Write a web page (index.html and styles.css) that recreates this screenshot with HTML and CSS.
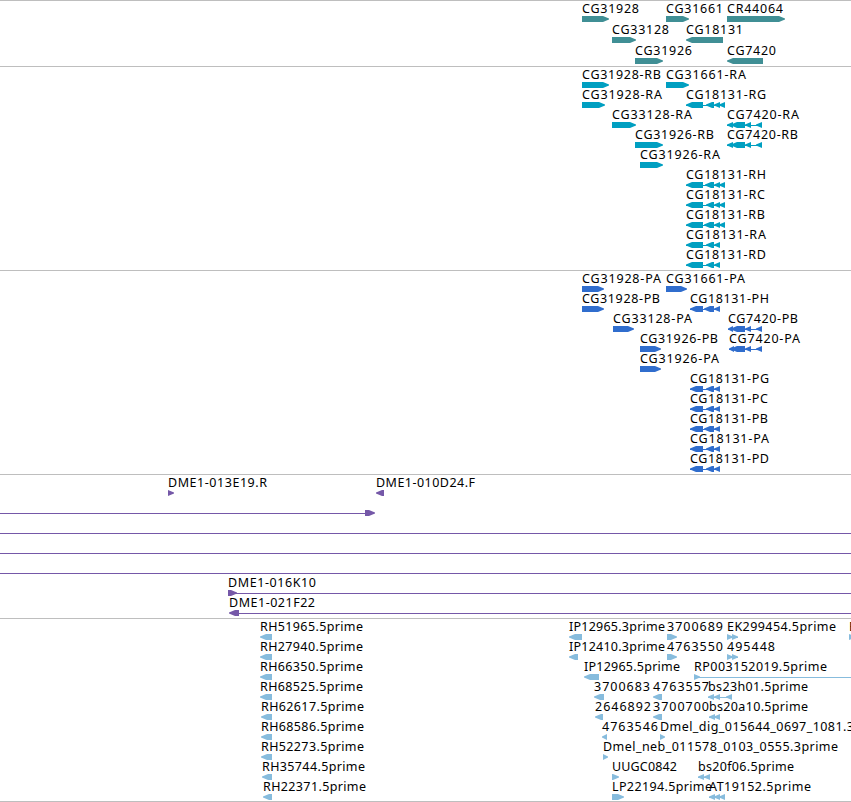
FILE: index.html
```html
<!DOCTYPE html>
<html lang="en">
<head>
<meta charset="UTF-8">
<title>Genome tracks</title>
<link rel="stylesheet" href="styles.css">
</head>
<body>
<main class="tracks">
  <svg class="track genes" id="genes"></svg>
  <svg class="track transcripts" id="transcripts"></svg>
  <svg class="track proteins" id="proteins"></svg>
  <svg class="track clones" id="clones"></svg>
  <svg class="track ests" id="ests"></svg>
</main>
<script src="tracks.js"></script>
</body>
</html>
```
FILE: styles.css
```css
*{box-sizing:border-box}
body{margin:0;background:#fff;overflow:hidden}
.tracks{display:flex;flex-direction:column;width:851px;border-bottom:1px solid #bebebe}
.track{display:block;width:100%;flex:none;border-top:1px solid #bebebe;overflow:hidden}
.track text{font:12.5px "Noto Sans","DejaVu Sans",sans-serif;fill:#000}
.genes{height:66px;color:#408f95}
.transcripts{height:204px;color:#009fc1}
.proteins{height:204px;color:#306dcd}
.clones{height:144px;color:#7558a8}
.ests{height:183px;color:#87bcdd}
.shape{fill:currentColor}
.line{fill:currentColor;shape-rendering:crispEdges}
```
FILE: tracks.js
```js
// feature: [label, row, strand, [[start, end], ...], connector]
const tracks = {
  genes: {pitch: 21, features: [
    ['CG31928', 0, 1, [[582, 609]]],
    ['CG31661', 0, 1, [[666, 689]]],
    ['CR44064', 0, 1, [[727, 785]]],
    ['CG33128', 1, 1, [[612, 636]]],
    ['CG18131', 1, -1, [[686, 723]]],
    ['CG31926', 2, 1, [[635, 663]]],
    ['CG7420', 2, -1, [[727, 763]]]
  ]},
  transcripts: {pitch: 20, features: [
    ['CG31928-RB', 0, 1, [[582, 609]]],
    ['CG31661-RA', 0, 1, [[666, 689]]],
    ['CG31928-RA', 1, 1, [[582, 605]]],
    ['CG18131-RG', 1, -1, [[686, 703], [706, 714], [714, 720], [719, 725]]],
    ['CG33128-RA', 2, 1, [[612, 636]]],
    ['CG7420-RA', 2, -1, [[727, 733], [731, 745], [745, 751], [756, 762]]],
    ['CG31926-RB', 3, 1, [[635, 663]]],
    ['CG7420-RB', 3, -1, [[727, 733], [731, 745], [745, 751], [756, 762]]],
    ['CG31926-RA', 4, 1, [[640, 663]]],
    ['CG18131-RH', 5, -1, [[686, 703], [705, 714], [714, 720], [719, 725]]],
    ['CG18131-RC', 6, -1, [[686, 703], [706, 714], [714, 720], [719, 725]]],
    ['CG18131-RB', 7, -1, [[686, 703], [704, 714], [714, 720], [719, 725]]],
    ['CG18131-RA', 8, -1, [[686, 703], [706, 714], [714, 720]]],
    ['CG18131-RD', 9, -1, [[686, 703], [706, 714], [714, 720]]]
  ]},
  proteins: {pitch: 20, features: [
    ['CG31928-PA', 0, 1, [[582, 604]]],
    ['CG31661-PA', 0, 1, [[666, 687]]],
    ['CG31928-PB', 1, 1, [[582, 604]]],
    ['CG18131-PH', 1, -1, [[690, 703], [704, 714], [714, 720]]],
    ['CG33128-PA', 2, 1, [[613, 634]]],
    ['CG7420-PB', 2, -1, [[728, 733], [731, 745], [745, 751], [756, 762]]],
    ['CG31926-PB', 3, 1, [[640, 661]]],
    ['CG7420-PA', 3, -1, [[729, 734], [731, 745], [745, 751], [756, 762]]],
    ['CG31926-PA', 4, 1, [[640, 661]]],
    ['CG18131-PG', 5, -1, [[690, 703], [706, 714], [714, 720]]],
    ['CG18131-PC', 6, -1, [[690, 703], [706, 714], [714, 720]]],
    ['CG18131-PB', 7, -1, [[690, 703], [704, 714], [714, 720]]],
    ['CG18131-PA', 8, -1, [[690, 703], [706, 714], [714, 720]]],
    ['CG18131-PD', 9, -1, [[690, 703], [706, 714], [714, 720]]]
  ]},
  clones: {pitch: 20, features: [
    ['DME1-013E19.R', 0, 1, [[168, 174]]],
    ['DME1-010D24.F', 0, -1, [[376, 384]]],
    ['', 1, 1, [[365, 375]], [0, 365]],
    ['', 2, 1, [], [0, 851]],
    ['', 3, 1, [], [0, 851]],
    ['', 4, 1, [], [0, 851]],
    ['DME1-016K10', 5, 1, [[228, 237]], [236, 851]],
    ['DME1-021F22', 6, -1, [[229, 239]], [239, 851]]
  ]},
  ests: {pitch: 20, features: [
    ['RH51965.5prime', 0, -1, [[260, 272]]],
    ['RH27940.5prime', 1, -1, [[260, 272]]],
    ['RH66350.5prime', 2, -1, [[260, 272]]],
    ['RH68525.5prime', 3, -1, [[260, 272]]],
    ['RH62617.5prime', 4, -1, [[261, 272]]],
    ['RH68586.5prime', 5, -1, [[261, 272]]],
    ['RH52273.5prime', 6, -1, [[261, 272]]],
    ['RH35744.5prime', 7, -1, [[262, 272]]],
    ['RH22371.5prime', 8, -1, [[263, 272]]],
    ['IP12965.3prime', 0, -1, [[569, 582]]],
    ['3700689', 0, 1, [[667, 677]]],
    ['EK299454.5prime', 0, 1, [[727, 733], [732, 738]]],
    ['E', 0, 1, [[849, 855]]],
    ['IP12410.3prime', 1, -1, [[569, 578]]],
    ['4763550', 1, 1, [[667, 677]]],
    ['495448', 1, 1, [[727, 733], [732, 738]]],
    ['IP12965.5prime', 2, -1, [[584, 599]]],
    ['RP003152019.5prime', 2, 1, [[694, 700]], [699, 851]],
    ['3700683', 3, -1, [[594, 604]]],
    ['4763557', 3, -1, [[653, 662]]],
    ['bs23h01.5prime', 3, -1, [[708, 714], [714, 720], [726, 732]]],
    ['2646892', 4, -1, [[595, 603]]],
    ['3700700', 4, -1, [[653, 662]]],
    ['bs20a10.5prime', 4, -1, [[709, 715], [714, 720]]],
    ['4763546', 5, -1, [[602, 607]]],
    ['Dmel_dig_015644_0697_1081.3prime', 5, 1, [[660, 665]]],
    ['Dmel_neb_011578_0103_0555.3prime', 6, 1, [[603, 608]]],
    ['UUGC0842', 7, 1, [[612, 619]]],
    ['bs20f06.5prime', 7, -1, [[698, 704], [704, 710]]],
    ['LP22194.5prime', 8, 1, [[612, 624]]],
    ['AT19152.5prime', 8, -1, [[709, 715], [714, 720], [719, 725]]]
  ]}
};

// whole-pixel advances of the label font
const advance = {'-': 6, '.': 4, '_': 6, C: 8, G: 9, R: 8, H: 9, A: 9, B: 8, D: 9, P: 7, M: 10, E: 7,
  F: 6, K: 8, I: 3, U: 8, L: 7, T: 7, p: 8, r: 5, i: 3, m: 11, e: 7, b: 8, s: 6, h: 8, a: 7, f: 4,
  l: 3, d: 8, g: 8, n: 8};

function add(svg, tag, attrs) {
  const el = document.createElementNS('http://www.w3.org/2000/svg', tag);
  for (const k in attrs) el.setAttribute(k, attrs[k]);
  svg.appendChild(el);
  return el;
}

// box with a pointed end, the tip is 1px tall
function arrow(s, e, strand, y) {
  const head = Math.min(6, e - s);
  const from = strand > 0 ? s : e;
  const tip = strand > 0 ? e : s;
  const neck = tip - strand * head;
  return `M${from} ${y}H${neck}L${tip} ${y + 2.5}V${y + 3.5}L${neck} ${y + 6}H${from}Z`;
}

for (const id in tracks) {
  const svg = document.getElementById(id);
  const {pitch, features} = tracks[id];
  features.forEach(([label, row, strand, parts, link]) => {
    const y = row * pitch + 15;
    if (!link && parts.length > 1) link = [parts[0][0], parts[parts.length - 1][1]];
    if (link) add(svg, 'rect', {class: 'line', x: link[0], y: y + 3, width: link[1] - link[0], height: 1});
    parts.forEach(([s, e]) => add(svg, 'path', {class: 'shape', d: arrow(s, e, strand, y)}));
  });
  features.forEach(([label, row, strand, parts]) => {
    if (!label) return;
    const width = [...label].reduce((w, c) => w + (advance[c] || 8), 0);
    add(svg, 'text', {x: parts[0][0], y: row * pitch + 12, textLength: width}).textContent = label;
  });
}
```
